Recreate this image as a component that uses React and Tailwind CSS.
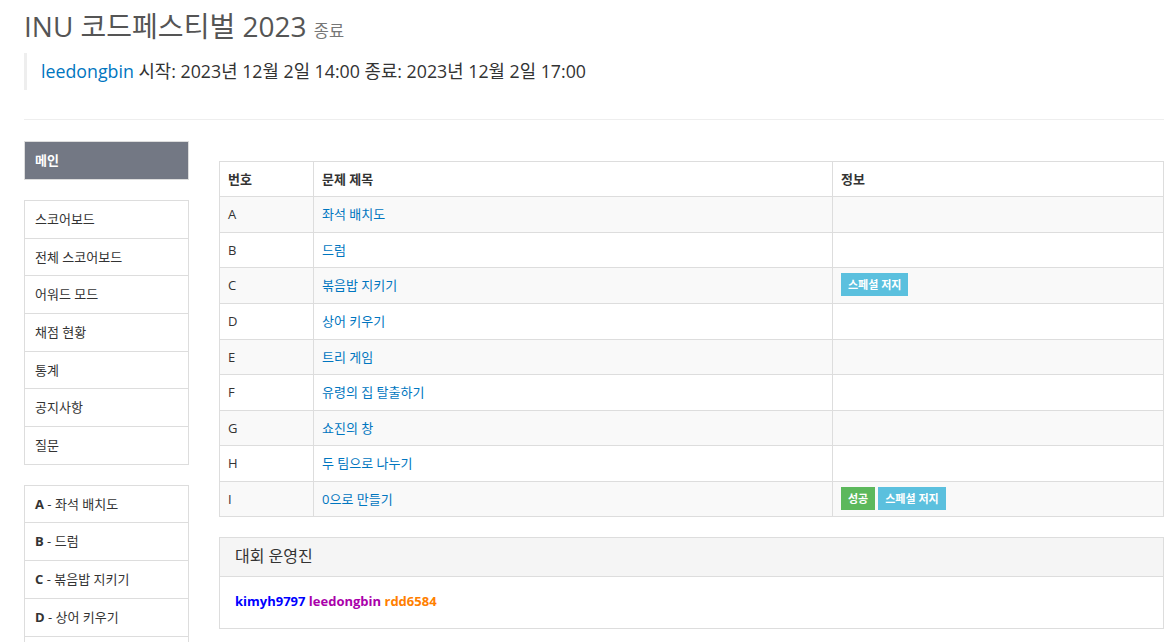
import React from 'react';

const FONT = { fontFamily: '"Open Sans", "Noto Sans CJK KR", sans-serif' };

const menu = ['스코어보드', '전체 스코어보드', '어워드 모드', '채점 현황', '통계', '공지사항', '질문'];

const problems = [
  { id: 'A', title: '좌석 배치도' },
  { id: 'B', title: '드럼' },
  { id: 'C', title: '볶음밥 지키기', special: true },
  { id: 'D', title: '상어 키우기' },
  { id: 'E', title: '트리 게임' },
  { id: 'F', title: '유령의 집 탈출하기' },
  { id: 'G', title: '쇼진의 창' },
  { id: 'H', title: '두 팀으로 나누기' },
  { id: 'I', title: '0으로 만들기', solved: true, special: true },
];

function Label({ color, children }) {
  return (
    <span
      className={`inline-block align-top h-[23px] -mt-[3px] -mb-[2px] px-[7px] text-[11px] font-bold leading-[23px] text-white ${color}`}
    >
      {children}
    </span>
  );
}

export default function App() {
  return (
    <div className="w-[1170px] bg-white px-[24px] pr-[6px] text-[13px] leading-[1.42857] text-[#333]" style={FONT}>
      <h1 className="pt-[11px] text-[28px] leading-[1.1] text-[#555]">
        INU 코드페스티벌 2023 <small className="text-[16.5px] text-[#777]">종료</small>
      </h1>
      <blockquote className="mt-[11px] border-l-[3px] border-[#eee] py-[6px] pl-[14px] text-[17.8px] leading-[25px] text-[#333]">
        <a className="text-[#0076c0]">leedongbin</a> 시작: 2023년 12월 2일 14:00 종료: 2023년 12월 2일 17:00
      </blockquote>
      <div className="mt-[29px] h-px bg-[#eee]" />

      <div className="flex gap-[30px]">
        <div className="mt-[21px] w-[165px] shrink-0">
          <div className="h-[39px] border border-[#ddd] bg-[#737884] px-[10px] text-[13px] font-bold leading-[37px] text-white">
            메인
          </div>
          <div className="mt-[20px]">
            {menu.map((m) => (
              <div key={m} className="-mb-px border border-[#ddd] px-[10px] py-[10px] leading-[16.7px] text-[#333]">
                {m}
              </div>
            ))}
          </div>
          <div className="mt-[21px]">
            {problems.map((p) => (
              <div key={p.id} className="-mb-px border border-[#ddd] px-[10px] py-[10px] leading-[16.7px] text-[#333]">
                <b>{p.id}</b> - {p.title}
              </div>
            ))}
          </div>
        </div>

        <div className="mt-[41px] min-w-0 flex-1">
          <table className="w-full border-collapse border border-[#ddd]">
            <thead>
              <tr>
                <th className="w-[94px] border border-[#ddd] p-[8px] text-left font-bold">번호</th>
                <th className="w-[519px] border border-[#ddd] p-[8px] text-left font-bold">문제 제목</th>
                <th className="border border-[#ddd] p-[8px] text-left font-bold">정보</th>
              </tr>
            </thead>
            <tbody>
              {problems.map((p, i) => (
                <tr key={p.id} className={i % 2 === 0 ? 'bg-[#f9f9f9]' : 'bg-white'}>
                  <td className="border border-[#ddd] p-[8px]">{p.id}</td>
                  <td className="border border-[#ddd] p-[8px]">
                    <a className="text-[#0076c0]">{p.title}</a>
                  </td>
                  <td className="border border-[#ddd] p-[8px]">
                    <div className="flex h-[18.57px] gap-[3px]">
                      {p.solved && <Label color="bg-[#5cb85c]">성공</Label>}
                      {p.special && <Label color="bg-[#5bc0de]">스페셜 저지</Label>}
                    </div>
                  </td>
                </tr>
              ))}
            </tbody>
          </table>

          <div className="mt-[20px] border border-[#ddd]">
            <div className="border-b border-[#ddd] bg-[#f5f5f5] px-[15px] py-[10px] text-[16px] leading-[1.1] text-[#333]">
              대회 운영진
            </div>
            <div className="px-[15px] pt-[15px] pb-[17px] font-bold">
              <span className="text-[#0000ff]">kimyh9797</span>{' '}
              <span className="text-[#aa00aa]">leedongbin</span>{' '}
              <span className="text-[#ff8000]">rdd6584</span>
            </div>
          </div>
        </div>
      </div>
    </div>
  );
}
